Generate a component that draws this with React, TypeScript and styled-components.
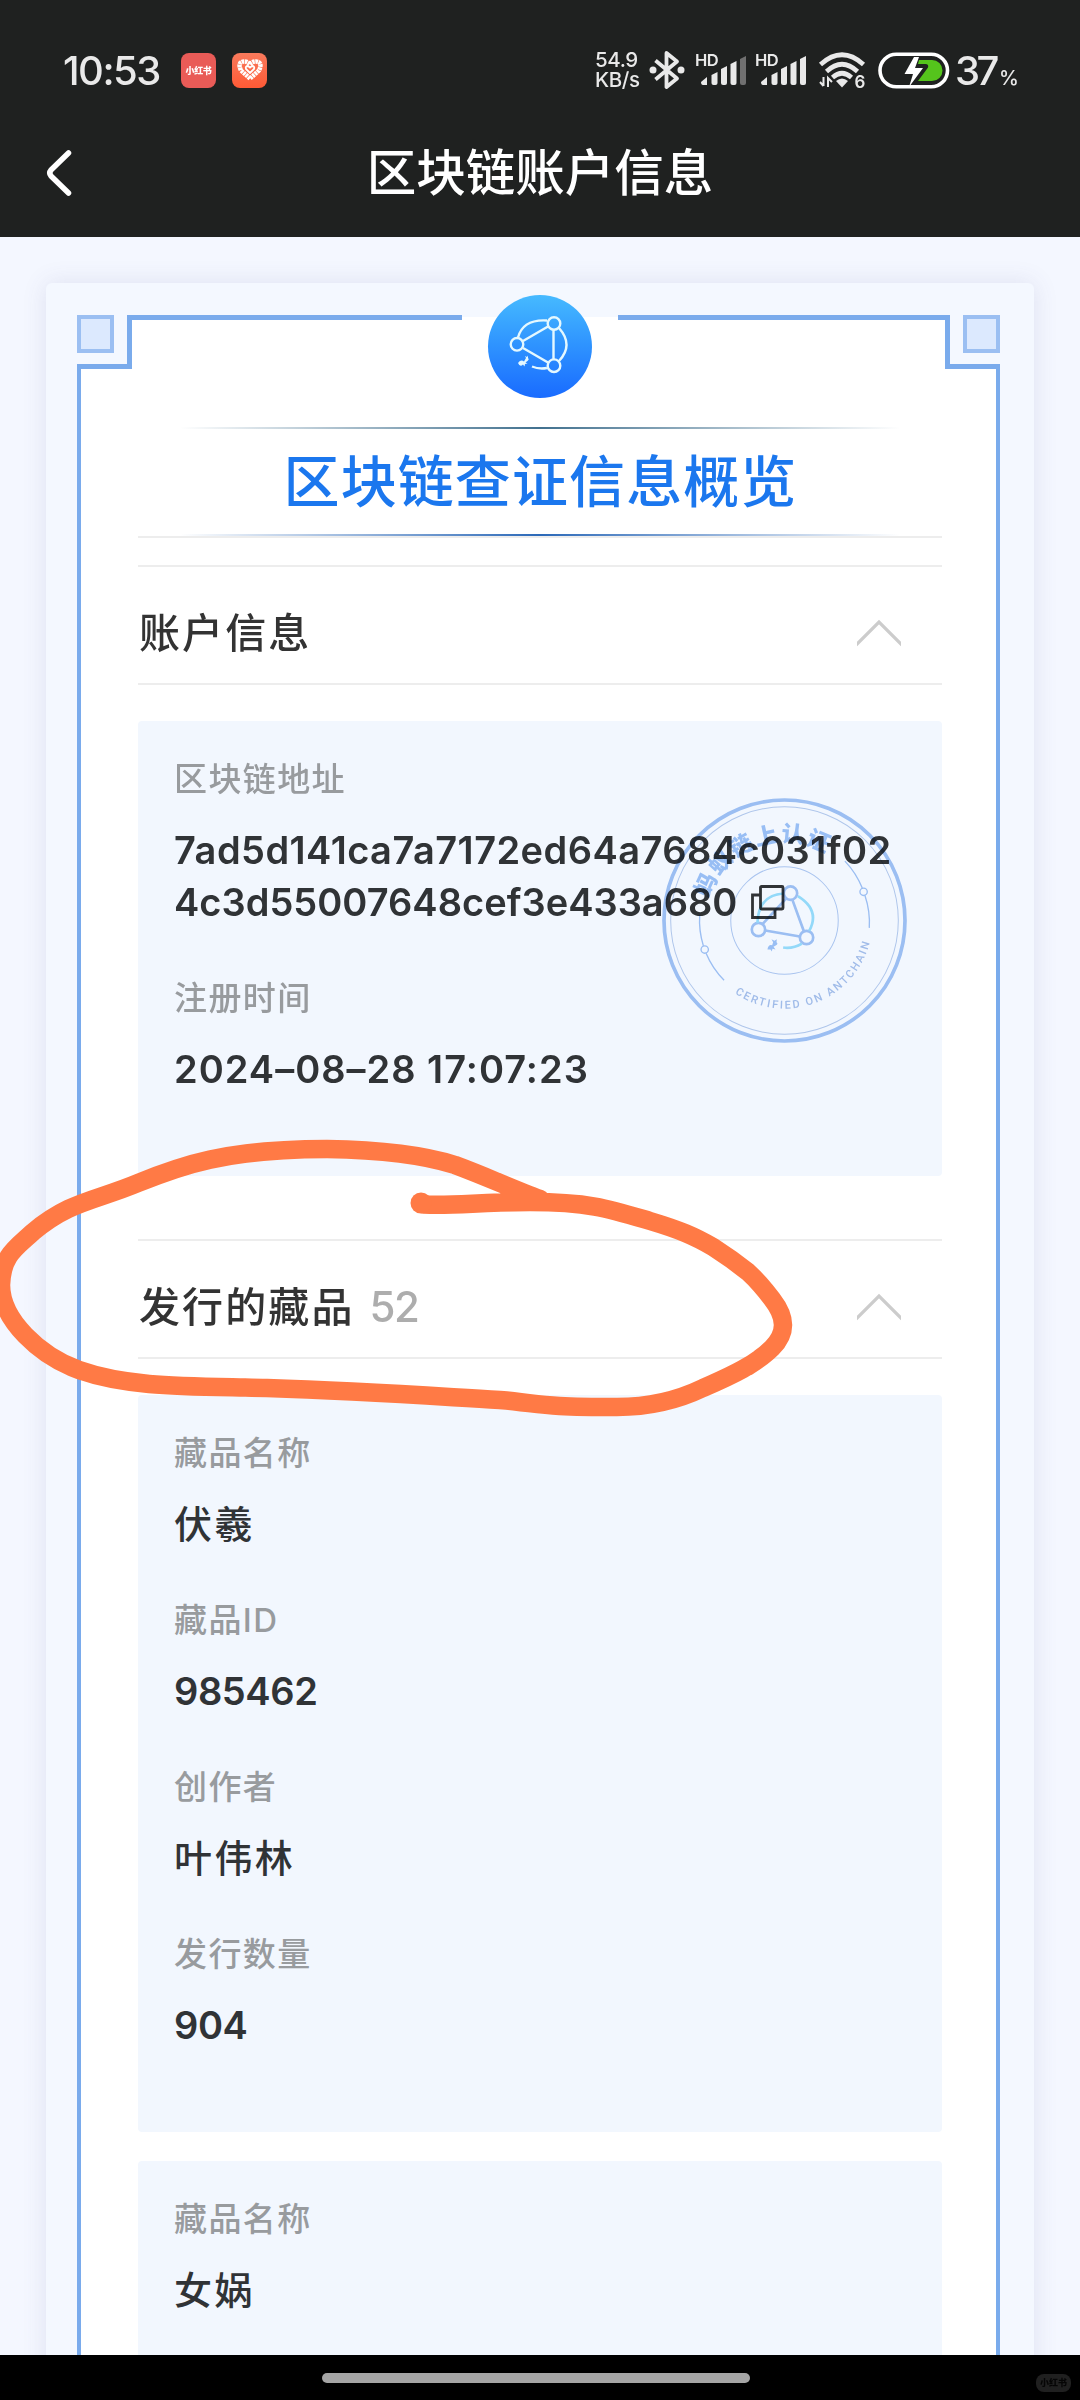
import React from 'react';
import styled, { createGlobalStyle } from 'styled-components';

const GlobalStyle = createGlobalStyle`
    * {
        box-sizing: border-box;
    }
    body {
        margin: 0;
        background: #f4f7ff;
        font-family: Inter, 'Noto Sans CJK SC', sans-serif;
        color: #303336;
    }
    svg {
        display: block;
        flex: none;
        overflow: visible;
    }
`

const Screen = styled.div`
    position: relative;
    width: 1080px;
    height: 2400px;
    overflow: hidden;
    display: flex;
    flex-direction: column;
`

/* ---------- header ---------- */

const Header = styled.header`
    flex: none;
    height: 237px;
    padding-top: 36px;
    background: #1f2120;
`

const StatusBar = styled.div`
    display: flex;
    align-items: center;
    height: 68px;
    padding: 0 66px 0 63px;
    color: #e9e9e9;
`

const Clock = styled.div`
    width: 118px;
    font-size: 40px;
    font-weight: 500;
    letter-spacing: -1.5px;
    white-space: nowrap;
`

const AppBadge = styled.div<{ $bg: string }>`
    display: flex;
    align-items: center;
    justify-content: center;
    width: 35px;
    height: 35px;
    margin-right: 16px;
    border-radius: 8px;
    background: ${(p) => p.$bg};
    color: #fff;
    font-size: 9px;
    font-weight: 900;
    letter-spacing: -0.4px;
`

const StatusIcons = styled.div`
    display: flex;
    align-items: center;
    margin-left: auto;
`

const NetSpeed = styled.div`
    display: flex;
    flex-direction: column;
    width: 54px;
    font-size: 20.5px;
    font-weight: 500;
    line-height: 20px;
    letter-spacing: -0.4px;
    white-space: nowrap;
`

const IconSlot = styled.div<{ $width: number }>`
    width: ${(p) => p.$width}px;
`

const Percent = styled.div`
    width: 59px;
    font-size: 40px;
    font-weight: 500;
    letter-spacing: -3.5px;
    white-space: nowrap;
    small {
        margin-left: 3px;
        font-size: 20px;
    }
`

const NavBar = styled.div`
    display: grid;
    grid-template-columns: 120px 1fr 120px;
    align-items: center;
    height: 133px;
    padding-top: 4px;
`

const BackButton = styled.button`
    padding: 0 0 0 45px;
    border: 0;
    background: none;
`

const NavTitle = styled.h1`
    margin: 0;
    color: #fff;
    font-size: 49.5px;
    font-weight: 500;
    line-height: 60px;
    text-align: center;
`

/* ---------- certificate card ---------- */

const Content = styled.main`
    flex: 1;
    min-height: 0;
    overflow: hidden;
    padding: 46px 46px 0;
`

const Card = styled.div`
    height: 2200px;
    padding: 32px 34px 0 31px;
    border-radius: 6px;
    background: #f4f8ff;
    box-shadow: 0 0 24px rgba(80, 80, 140, 0.13);
`

const FrameTop = styled.div`
    position: relative;
    display: grid;
    grid-template-columns: 50px 1fr 50px;
    height: 54px;
`

const Corner = styled.div<{ $right?: boolean }>`
    display: flex;
    justify-content: ${(p) => (p.$right ? 'flex-end' : 'flex-start')};
    border-bottom: 5px solid #7aabec;
`

const CornerSquare = styled.div`
    width: 37px;
    height: 38px;
    border: 4px solid #9bbff2;
    background: #dce9fe;
`

const TopEdge = styled.div`
    display: flex;
    justify-content: space-between;
    border: solid #7aabec;
    border-width: 0 5px;
    background: linear-gradient(#f4f8ff 2px, #fff 2px);
`

const EdgeLine = styled.div<{ $width: number }>`
    width: ${(p) => p.$width}px;
    height: 5px;
    background: #7aabec;
`

const ChainLogo = styled.div`
    position: absolute;
    top: -20px;
    left: 411px;
    width: 104px;
    height: 103px;
    border-radius: 50%;
    background: linear-gradient(#46baff, #3096ff 45%, #196bff);
`

const FrameBody = styled.div`
    height: 2100px;
    padding: 58px 54px 0 57px;
    border: solid #7aabec;
    border-width: 0 4px;
    background: #fff;
`

const Overview = styled.div`
    display: flex;
    flex-direction: column;
    align-items: center;
    margin-bottom: 27px;
    border-bottom: 2px solid #ededed;
`

const FadeLine = styled.div<{ $color: string }>`
    width: 720px;
    height: 2px;
    background: linear-gradient(90deg, transparent, ${(p) => p.$color} 50%, transparent);
`

const OverviewTitle = styled.h2`
    height: 105px;
    margin: 0;
    color: #1b77ee;
    font-size: 56px;
    font-weight: 500;
    line-height: 107px;
    letter-spacing: 1.1px;
    text-indent: 1px;
`

const SectionHead = styled.div`
    display: flex;
    align-items: center;
    justify-content: space-between;
    height: 120px;
    margin-bottom: 36px;
    padding: 16px 41px 0 1px;
    border: solid #ededed;
    border-width: 2px 0;
`

const SectionTitle = styled.h3`
    display: flex;
    align-items: center;
    margin: 0;
    color: #333;
    font-size: 41px;
    font-weight: 500;
    line-height: 60px;
    letter-spacing: 2.1px;
`

const Count = styled.span`
    margin-left: 15px;
    color: #adadad;
    font-size: 42px;
    letter-spacing: -1.5px;
`

const Panel = styled.div<{ $gap: number }>`
    position: relative;
    margin-bottom: ${(p) => p.$gap}px;
    padding: 36px 36px 33px;
    border-radius: 4px;
    background: #f2f7fe;
`

const TallPanel = styled(Panel)`
    height: 737px;
`

const Field = styled.div`
    margin-bottom: 48px;
`

const Label = styled.div`
    height: 44px;
    margin-bottom: 23px;
    color: #989b9e;
    font-size: 33px;
    font-weight: 500;
    line-height: 45px;
    letter-spacing: 1.4px;
`

const Value = styled.div<{ $spacing?: number; $weight?: number }>`
    display: flex;
    align-items: center;
    height: 52px;
    color: #303336;
    font-size: 38px;
    font-weight: ${(p) => p.$weight ?? 500};
    line-height: 52px;
    letter-spacing: ${(p) => p.$spacing ?? 2.4}px;
    white-space: nowrap;
    svg {
        margin-left: 14px;
    }
`

const Seal = styled.div`
    position: absolute;
    top: 77px;
    right: 35px;
    mix-blend-mode: multiply;
`

/* ---------- bottom bar and pen mark ---------- */

const HomeBar = styled.footer`
    display: grid;
    grid-template-columns: 322px 428px 1fr;
    align-items: center;
    flex: none;
    height: 45px;
    background: #000;
`

const HomeHandle = styled.div`
    grid-column: 2;
    height: 10px;
    border-radius: 5px;
    background: #a5a5a5;
`

const AppMark = styled.div`
    justify-self: end;
    margin: 10px 9px 0 0;
    width: 35px;
    height: 18px;
    border-radius: 8px;
    background: #202020;
    color: #050505;
    font-size: 9px;
    font-weight: 900;
    line-height: 17px;
    text-align: center;
`

const PenMark = styled.svg`
    position: absolute;
    top: 1120px;
    left: 0;
`

const Bluetooth = () => (
    <svg width="36" height="40" viewBox="0 0 36 40" fill="none" stroke="#e9e9e9" strokeWidth="3.8" strokeLinejoin="round">
        <path d="M6.500 10.500L28 28.500 17.500 37V3L28 11.500 6.500 29.500" />
        <circle cx="4" cy="20" r="3.500" fill="#e9e9e9" stroke="none" />
        <circle cx="32" cy="20" r="3.500" fill="#e9e9e9" stroke="none" />
    </svg>
);

const Signal = ({ weak }: { weak?: boolean }) => (
    <svg width="52" height="36" viewBox="0 0 52 36" fill="#e9e9e9">
        <text x="-1" y="14" fontSize="16.5" fontWeight="600" letterSpacing="-0.5">HD</text>
        <path d="M5 30l6-5v8H7q-2 0-2-3z" />
        <path d="M15.500 23l6-3v11q0 2-2 2h-2q-2 0-2-2z" />
        <path d="M25 17l6-3v17q0 2-2 2h-2q-2 0-2-2z" />
        <path d="M34.500 12l6-3v22q0 2-2 2h-2q-2 0-2-2z" />
        <path d="M44 7l6-3v27q0 2-2 2h-2q-2 0-2-2z" fill={weak ? '#707070' : '#e9e9e9'} />
    </svg>
);

const Wifi = () => (
    <svg width="47" height="38" viewBox="0 0 47 38" fill="none" stroke="#e9e9e9" strokeWidth="4.600">
        <path d="M1.500 13.500Q23 -6 44.500 13.500" />
        <path d="M7.500 20.500Q23 6 38.500 20.500" />
        <path d="M13.500 26.500Q23 18 32.500 26.500" />
        <path d="M17 30q6-5 12 0L23 36.500z" fill="#e9e9e9" stroke="none" />
        <path d="M4.500 26v9M1 31l3.500 4M9 36v-9l4 4" strokeWidth="2" />
        <text x="35.500" y="36.500" fontSize="17" fontWeight="600" fill="#e9e9e9" stroke="none">6</text>
    </svg>
);

const Battery = () => (
    <svg width="73" height="37" viewBox="0 0 73 37">
        <rect x="3" y="2.200" width="67.500" height="32.600" rx="16.300" fill="none" stroke="#fff" strokeWidth="3.600" />
        <path d="M42 8h13a10.500 10.500 0 0 1 0 21H41l10-13.500q1-3.500-2.500-3.500H41z" fill="#55c41c" />
        <path d="M37 5L27.500 22H36l-4 13 14-19h-8l4-11z" fill="#fff" />
    </svg>
);

const HeartBadge = () => (
    <svg width="26" height="24" viewBox="0 0 26 24">
        <path d="M13 20.500L4 12.500Q0 4 7 3.500q4 0 6 3 2-3 6-3 7 .5 3 9z" fill="none" stroke="#fff" strokeWidth="4.500" strokeDasharray="2.500 .6" />
        <path d="M13 15l-4-4q-1-3 2-3l2 1.500L15 8q3 0 2 3z" fill="none" stroke="#fff" strokeWidth="1.800" />
    </svg>
);

const ChainIcon = () => (
    <svg width="104" height="103" viewBox="488 295 104 103" fill="none" stroke="#e4f8ff" strokeWidth="2.400">
        <path d="M523 341l25-14.500M523 348l25 14.500M553.500 330v29" />
        <path d="M518 337.500Q523 319 547 320.500M559 328q15 17 0 33M532 366.500q7 3 15 1.500" />
        <circle cx="517" cy="344.300" r="6.300" />
        <circle cx="554" cy="323.500" r="6.300" />
        <circle cx="554" cy="365.700" r="6.300" />
        <path d="M518 363q3-4 6-1.500l2-3.500-1-2 2 1 1-1.500v2.500q1.500 1 0 2.500l-2.500 2 2 1-2.500.500-.500 2.500-1.500-2q-3 3-5-1.500z" fill="#e4f8ff" stroke="none" />
    </svg>
);

const ArrowSvg = styled.svg`
    overflow: hidden;
`

const ArrowUp = () => (
    <ArrowSvg width="44" height="28" viewBox="0 0 44 28" fill="none">
        <path d="M-1 26L22 3l23 23" stroke="#ccc" strokeWidth="3.200" />
    </ArrowSvg>
);

const CopyIcon = () => (
    <svg width="34" height="34" viewBox="0 0 34 34" fill="none" stroke="#303336" strokeWidth="2.800">
        <rect x="9.500" y="1.500" width="22.500" height="22.500" rx="1" />
        <path d="M9 10H1.500v22.500H24v-8" />
    </svg>
);

const SealImage = () => (
    <svg width="245" height="245" viewBox="127 714 734 734" fill="none" stroke="#a3c4f3">
        <circle cx="494" cy="1081" r="361" strokeWidth="11" />
        <circle cx="494" cy="1081" r="341" strokeWidth="3" stroke="#b9cdec" />
        <circle cx="494" cy="1081" r="161" strokeWidth="3" stroke="#b3cbf0" />
        <g strokeWidth="4">
            <path d="M240 1064A254 254 0 0 0 251 1157M259 1179A254 254 0 0 0 313 1260" />
            <path d="M675 903A254 254 0 0 1 727 984M735 1006A254 254 0 0 1 748 1103" />
            <circle cx="255" cy="1168" r="11" />
            <circle cx="731" cy="995" r="11" />
        </g>
        <path id="sealTop" d="M259 1081A235 235 0 0 1 729 1081" stroke="none" />
        <path id="sealBottom" d="M230 1081A264 264 0 0 0 758 1081" stroke="none" />
        <text fill="#a0c4f5" stroke="none" fontSize="68" fontWeight="900">
            <textPath href="#sealTop" startOffset="66" textLength="432">蚂蚁链上认证</textPath>
        </text>
        <text fill="#a9c2ea" stroke="none" fontSize="33" fontWeight="500" fontFamily="Roboto, sans-serif">
            <textPath href="#sealBottom" startOffset="256" textLength="506">CERTIFIED ON ANTCHAIN</textPath>
        </text>
        <g strokeWidth="8">
            <path d="M428 1092l70-76M436 1111l104 18M518 1020l34 93" />
            <circle cx="416" cy="1108" r="20" />
            <circle cx="512" cy="999" r="20" />
            <circle cx="560" cy="1132" r="20" />
        </g>
        <path d="M413 1088Q416 1004 492 1000M534 1008Q602 1050 568 1112M490 1162Q520 1166 546 1150" stroke="#9be0fa" strokeWidth="8" />
        <path d="M443 1168q2-16 14-13l3-9-5-9 9 5 7-5-1 9q6 4-1 9l-8 5 6 8-9-2-2 8-4-6z" fill="#a0c4f5" stroke="none" />
    </svg>
);

type Line = { text: string; spacing?: number; weight?: number };
type FieldData = { label: string; lines: Line[]; copy?: boolean };

const accountFields: FieldData[] = [
    {
        label: '区块链地址',
        lines: [
            { text: '7ad5d141ca7a7172ed64a7684c031f02', spacing: 0.45, weight: 600 },
            { text: '4c3d55007648cef3e433a680', spacing: 0.02, weight: 600 },
        ],
        copy: true,
    },
    { label: '注册时间', lines: [{ text: '2024–08–28 17:07:23', spacing: 1, weight: 600 }] },
];

const collections: FieldData[][] = [
    [
        { label: '藏品名称', lines: [{ text: '伏羲' }] },
        { label: '藏品ID', lines: [{ text: '985462', spacing: -0.4, weight: 600 }] },
        { label: '创作者', lines: [{ text: '叶伟林' }] },
        { label: '发行数量', lines: [{ text: '904', spacing: -0.4, weight: 600 }] },
    ],
    [
        { label: '藏品名称', lines: [{ text: '女娲' }] },
    ],
];

const Fields = ({ items }: { items: FieldData[] }) => (
    <>
        {items.map((item) => (
            <Field key={item.label}>
                <Label>{item.label}</Label>
                {item.lines.map((line, i) => (
                    <Value key={line.text} $spacing={line.spacing} $weight={line.weight}>
                        {line.text}
                        {item.copy && i === item.lines.length - 1 && <CopyIcon />}
                    </Value>
                ))}
            </Field>
        ))}
    </>
);

const App = () => {
    return (
        <Screen>
            <GlobalStyle />
            <Header>
                <StatusBar>
                    <Clock>10:53</Clock>
                    <AppBadge $bg="#e95b57">小红书</AppBadge>
                    <AppBadge $bg="linear-gradient(#f97a5c, #ff5a35)"><HeartBadge /></AppBadge>
                    <StatusIcons>
                        <NetSpeed>
                            <span>54.9</span>
                            <span>KB/s</span>
                        </NetSpeed>
                        <IconSlot $width={47}><Bluetooth /></IconSlot>
                        <IconSlot $width={60}><Signal weak /></IconSlot>
                        <IconSlot $width={63}><Signal /></IconSlot>
                        <IconSlot $width={58}><Wifi /></IconSlot>
                        <IconSlot $width={78}><Battery /></IconSlot>
                        <Percent>37<small>%</small></Percent>
                    </StatusIcons>
                </StatusBar>
                <NavBar>
                    <BackButton>
                        <svg width="28" height="50" viewBox="0 0 28 50" fill="none" stroke="#fff" strokeWidth="5.500" strokeLinecap="round" strokeLinejoin="round">
                            <path d="M23.500 5L6 22q-2.500 3 0 6L23.500 45" />
                        </svg>
                    </BackButton>
                    <NavTitle>区块链账户信息</NavTitle>
                </NavBar>
            </Header>

            <Content>
                <Card>
                    <FrameTop>
                        <Corner><CornerSquare /></Corner>
                        <TopEdge>
                            <EdgeLine $width={330} />
                            <EdgeLine $width={327} />
                        </TopEdge>
                        <Corner $right><CornerSquare /></Corner>
                        <ChainLogo><ChainIcon /></ChainLogo>
                    </FrameTop>
                    <FrameBody>
                        <Overview>
                            <FadeLine $color="#42718f" />
                            <OverviewTitle>区块链查证信息概览</OverviewTitle>
                            <FadeLine $color="#2c69b8" />
                        </Overview>

                        <SectionHead>
                            <SectionTitle>账户信息</SectionTitle>
                            <ArrowUp />
                        </SectionHead>
                        <Panel $gap={63}>
                            <Fields items={accountFields} />
                            <Seal><SealImage /></Seal>
                        </Panel>

                        <SectionHead>
                            <SectionTitle>发行的藏品<Count>52</Count></SectionTitle>
                            <ArrowUp />
                        </SectionHead>
                        {collections.map((items, i) => (
                            <TallPanel key={i} $gap={29}>
                                <Fields items={items} />
                            </TallPanel>
                        ))}
                    </FrameBody>
                </Card>
            </Content>

            <HomeBar>
                <HomeHandle />
                <AppMark>小红书</AppMark>
            </HomeBar>

            <PenMark width="1080" height="320" viewBox="0 1120 1080 320" fill="none" stroke="#ff7a45" strokeWidth="18.500" strokeLinecap="round" strokeLinejoin="round">
                <path d="M424 1204.500C455 1206 480 1202 530 1202C590 1202 610 1209 650 1221C680 1230 694 1236 713 1247C727 1256 738 1264 748 1272C759 1282 766 1291 772 1299C779 1308 783 1316 783 1325C783 1334 778 1342 772 1348C756 1364 733 1375 703 1388C676 1401 650 1407 617 1407C540 1407 545 1404 500 1400C400 1394 360 1391 267 1388C190 1386 130 1388 79 1370C40 1356 1 1320 1 1285C2 1255 16 1248 33 1232C70 1201 95 1201 138 1183C180 1166 225 1149 327 1149C390 1150 430 1157 455 1165C490 1178 515 1190 540 1199" />
                <circle cx="421" cy="1203" r="10.500" fill="#ff7a45" stroke="none" />
            </PenMark>
        </Screen>
    );
};

export default App;
